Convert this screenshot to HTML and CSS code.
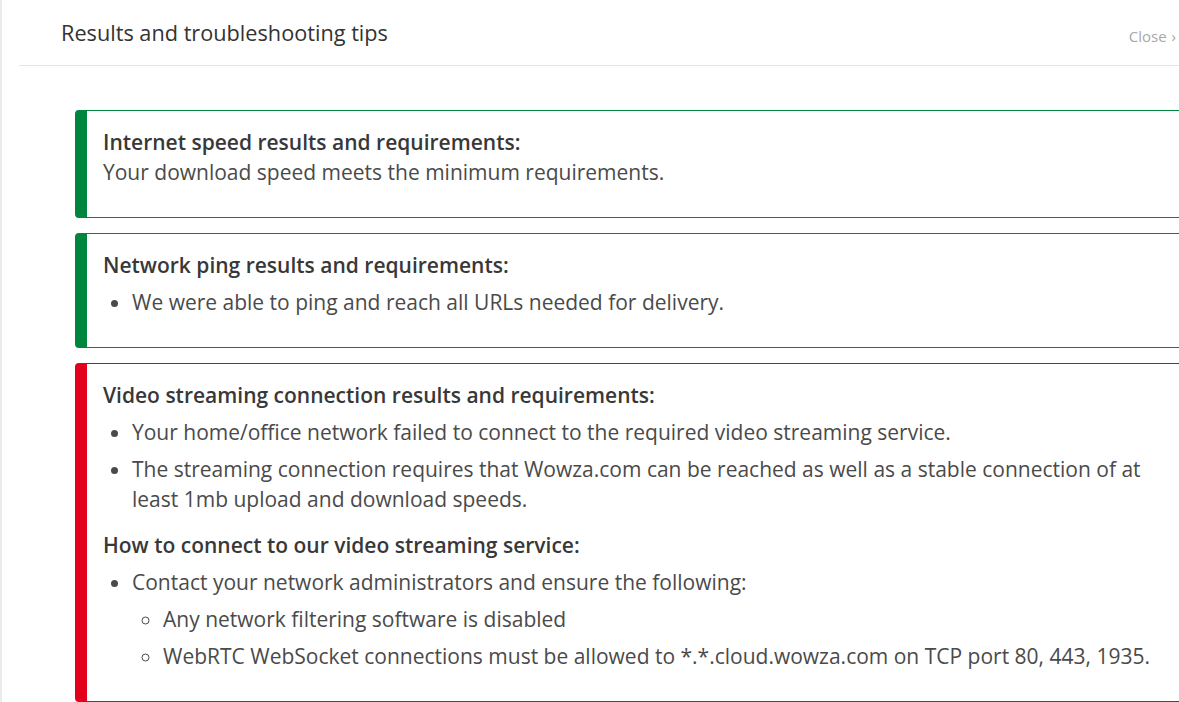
FILE: index.html
```html
<!DOCTYPE html>
<html lang="en">
<head>
    <meta charset="UTF-8">
    <meta name="viewport" content="width=device-width, initial-scale=1.0">
    <title>Results and troubleshooting tips</title>
    <link rel="stylesheet" href="styles.css">
</head>
<body>

    <div class="modal">
        <div class="modal-header">
            <h2>Results and troubleshooting tips</h2>
            <a href="#" class="close">Close <span class="chev">&#x203A;</span></a>
        </div>

        <div class="modal-body">
            <div class="result pass">
                <h3>Internet speed results and requirements:</h3>
                <p>Your download speed meets the minimum requirements.</p>
            </div>

            <div class="result pass">
                <h3>Network ping results and requirements:</h3>
                <ul>
                    <li>We were able to ping and reach all URLs needed for delivery.</li>
                </ul>
            </div>

            <div class="result fail">
                <h3>Video streaming connection results and requirements:</h3>
                <ul>
                    <li>Your home/office network failed to connect to the required video streaming service.</li>
                    <li>The streaming connection requires that Wowza.com can be reached as well as a stable connection of at least 1mb upload and download speeds.</li>
                </ul>
                <h3>How to connect to our video streaming service:</h3>
                <ul>
                    <li>Contact your network administrators and ensure the following:
                        <ul>
                            <li>Any network filtering software is disabled</li>
                            <li>WebRTC WebSocket connections must be allowed to *.*.cloud.wowza.com on TCP port 80, 443, 1935.</li>
                        </ul>
                    </li>
                </ul>
            </div>
        </div>
    </div>

</body>
</html>
```

FILE: styles.css
```css
* {
    margin: 0;
    padding: 0;
    box-sizing: border-box;
    font-family: "Open Sans", "Liberation Sans", sans-serif;
}

body {
    background-color: #fff;
    border-left: 2px solid #ebebeb;
    min-height: 702px;
    overflow: hidden;
}

.modal {
    width: 1200px;
    margin-left: 17px;
}

.modal-header {
    display: flex;
    justify-content: space-between;
    align-items: center;
    padding: 18px 43px 17px 42px;
    border-bottom: 1px solid #e4e5ea;
}

.modal-header h2 {
    font-size: 21.7px;
    font-weight: 400;
    line-height: 30px;
    color: #333;
}

.close {
    font-size: 15px;
    color: #a8a8a8;
    text-decoration: none;
    margin-top: 5px;
}

.close .chev {
    margin-left: 1px;
}

.modal-body {
    display: flex;
    flex-direction: column;
    gap: 15px;
    padding: 44px 20px 0 56px;
}

.result {
    border: 1px solid;
    border-left-width: 12px;
    border-radius: 4px;
    padding: 16px 24px 14px 16px;
    font-size: 21px;
    line-height: 30px;
    color: #4a4a4a;
}

.result.pass {
    border-color: #00853e;
}

.result.fail {
    border-color: #e2001a;
}

.result h3 {
    font-size: 21px;
    font-weight: 600;
    color: #383838;
}

.result p,
.result > ul {
    margin-bottom: 16px;
}

.result ul {
    padding-left: 29px;
}

.result ul ul {
    padding-left: 31px;
    list-style-type: circle;
}

.result li {
    margin-top: 7px;
}

.result h3 + ul {
    margin-top: 1px;
}
```
